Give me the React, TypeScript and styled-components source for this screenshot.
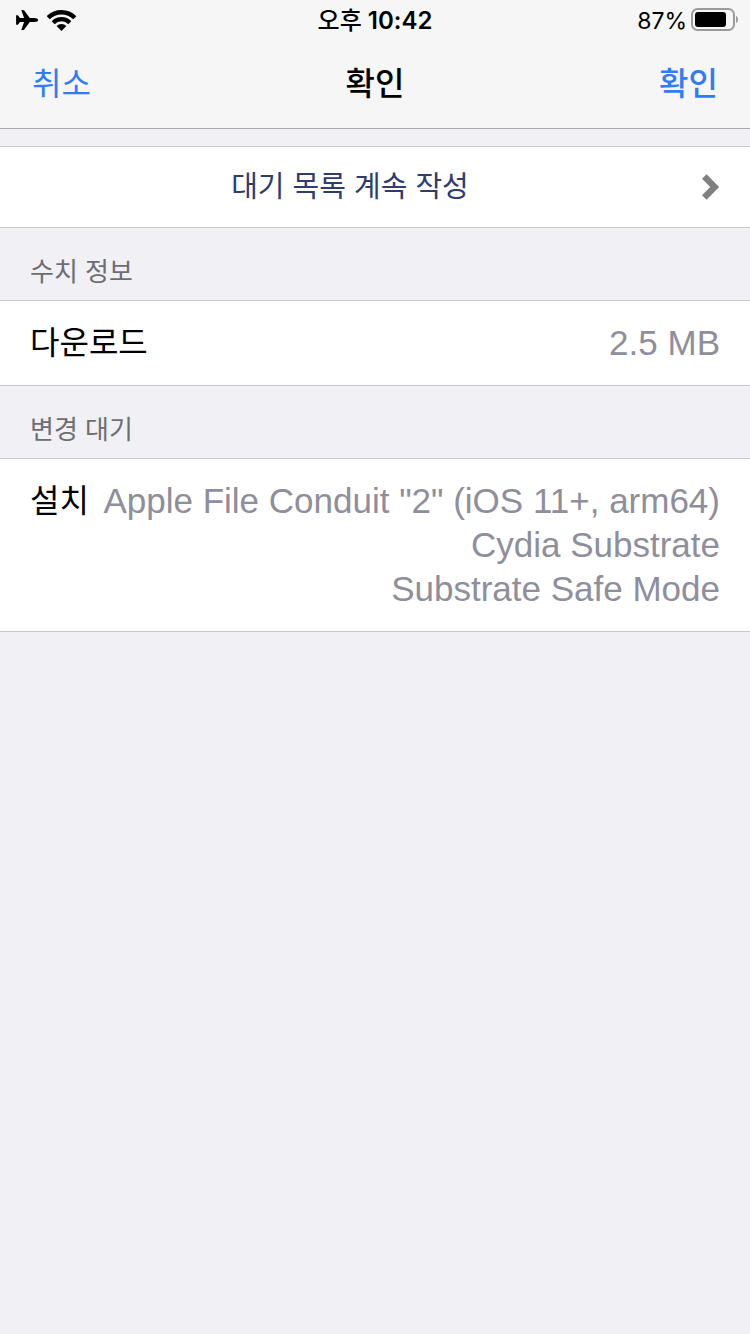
import React from "react";
import styled, { createGlobalStyle } from "styled-components";

const GlobalStyle = createGlobalStyle`
  *, *::before, *::after { box-sizing: border-box; }
  html { background: #f0f0f5; }
  body {
    margin: 0;
    color: #000;
    font-family: "Liberation Sans", "Noto Sans CJK KR", sans-serif;
  }
  h1, h2, dl, dt, dd, ul { margin: 0; padding: 0; }
`;

const Screen = styled.div`
  min-height: 100vh;
  background: #f0f0f5;
`;

const Header = styled.header`
  background: #f6f6f6;
  border-bottom: 1px solid #a9a9ac;
`;

const StatusBar = styled.div`
  display: grid;
  grid-template-columns: 1fr auto 1fr;
  align-items: center;
  height: 40px;
  padding: 0 12px;
  font-family: Inter, "Noto Sans CJK KR", sans-serif;
  font-size: 24px;
  line-height: 32px;
`;

const StatusGroup = styled.div<{ $end?: boolean }>`
  display: flex;
  align-items: center;
  justify-content: ${(p) => (p.$end ? "flex-end" : "flex-start")};
  gap: ${(p) => (p.$end ? 3 : 8)}px;
  padding-left: 3px;
`;

const Time = styled.time`
  padding-top: 2px;
  font-weight: 600;
`;

const TimePeriod = styled.span`
  font-weight: 500;
`;

const BatteryLevel = styled.span`
  padding-top: 2px;
  font-size: 23px;
`;

const NavBar = styled.nav`
  display: grid;
  grid-template-columns: 1fr auto 1fr;
  align-items: center;
  height: 88px;
  padding: 0 32px;
`;

const Title = styled.h1`
  font-size: 32px;
  font-weight: 500;
  line-height: 44px;
`;

const NavButton = styled.button<{ $primary?: boolean }>`
  justify-self: ${(p) => (p.$primary ? "end" : "start")};
  padding: 0;
  border: 0;
  background: none;
  color: #2f7cf6;
  font-family: inherit;
  font-size: 32px;
  font-weight: ${(p) => (p.$primary ? 500 : 400)};
  line-height: 44px;
  cursor: pointer;
`;

const Content = styled.main`
  padding-top: 17px;
`;

const Panel = styled.div`
  background: #fff;
  border-top: 1px solid #c8c7cc;
  border-bottom: 1px solid #c8c7cc;
`;

const QueueLink = styled.a`
  display: flex;
  align-items: center;
  height: 80px;
  padding-right: 30px;
  color: #2e3d6e;
  font-size: 29px;
  line-height: 44px;
  text-decoration: none;
`;

const QueueLabel = styled.span`
  flex: 1;
  text-align: center;
`;

const SectionTitle = styled.h2`
  padding: 26px 30px 10px;
  color: #6d6d72;
  font-size: 26px;
  font-weight: 400;
  line-height: 36px;
`;

const Row = styled.dl`
  display: flex;
  justify-content: space-between;
  gap: 12px;
  padding: 20px 30px;
  line-height: 44px;
`;

const Term = styled.dt`
  flex: none;
  font-size: 32px;
`;

const Value = styled.dd`
  color: #8e8e9c;
  font-size: 35px;
  text-align: right;
`;

const PackageList = styled.ul`
  list-style: none;
`;

const AirplaneIcon = () => (
  <svg width="24" height="22" viewBox="0 0 24 22" aria-label="비행기 모드" role="img">
    <path d="M23.200 11c0 1-1.500 2-3.700 2h-4.700L9.200 20.400c-.4.500-.8.700-1.300.7H6.300L9.100 13H4.900L2.900 15.800H1.100V6.200h1.800L4.900 9h4.200L6.300.9h1.600c.5 0 .9.200 1.300.7L14.800 9h4.700c2.200 0 3.700 1 3.700 2z" />
  </svg>
);

const WifiIcon = () => (
  <svg width="30" height="22" viewBox="0 0 30 22" aria-label="Wi-Fi" role="img">
    <path d="M1.200 8.700A18.800 18.800 0 0 1 27.800 8.700" fill="none" stroke="#000" strokeWidth="4.400" />
    <path d="M6.160 13.660A11.800 11.800 0 0 1 22.840 13.660" fill="none" stroke="#000" strokeWidth="4.200" />
    <path d="M14.500 22L9.600 17.100A7 7 0 0 1 19.400 17.100z" />
  </svg>
);

const BatteryIcon = () => (
  <svg width="48" height="24" viewBox="0 0 48 24" aria-label="배터리" role="img">
    <rect x="2" y="1" width="42" height="21" rx="5.500" fill="none" stroke="#9b9b9b" strokeWidth="2" />
    <rect x="5" y="4" width="31" height="15" rx="3" />
    <path d="M46 8c1.500.6 2 1.900 2 3.500s-.5 2.900-2 3.500z" fill="#9b9b9b" />
  </svg>
);

const ChevronIcon = () => (
  <svg width="20" height="28" viewBox="0 0 20 28" aria-hidden="true">
    <path d="M4.300 3.400L14.700 14L4.300 24.600" fill="none" stroke="#808080" strokeWidth="6.400" />
  </svg>
);

const packages = [
  'Apple File Conduit "2" (iOS 11+, arm64)',
  "Cydia Substrate",
  "Substrate Safe Mode",
];

export default function App() {
  return (
    <Screen lang="ko">
      <GlobalStyle />
      <Header>
        <StatusBar>
          <StatusGroup>
            <AirplaneIcon />
            <WifiIcon />
          </StatusGroup>
          <Time dateTime="22:42">
            <TimePeriod>오후</TimePeriod> 10:42
          </Time>
          <StatusGroup $end>
            <BatteryLevel>87%</BatteryLevel>
            <BatteryIcon />
          </StatusGroup>
        </StatusBar>
        <NavBar>
          <NavButton type="button">취소</NavButton>
          <Title>확인</Title>
          <NavButton type="button" $primary>확인</NavButton>
        </NavBar>
      </Header>
      <Content>
        <Panel>
          <QueueLink href="#queue">
            <QueueLabel>대기 목록 계속 작성</QueueLabel>
            <ChevronIcon />
          </QueueLink>
        </Panel>
        <section>
          <SectionTitle>수치 정보</SectionTitle>
          <Panel>
            <Row>
              <Term>다운로드</Term>
              <Value>2.5 MB</Value>
            </Row>
          </Panel>
        </section>
        <section>
          <SectionTitle>변경 대기</SectionTitle>
          <Panel>
            <Row>
              <Term>설치</Term>
              <Value>
                <PackageList>
                  {packages.map((name) => (
                    <li key={name}>{name}</li>
                  ))}
                </PackageList>
              </Value>
            </Row>
          </Panel>
        </section>
      </Content>
    </Screen>
  );
}
